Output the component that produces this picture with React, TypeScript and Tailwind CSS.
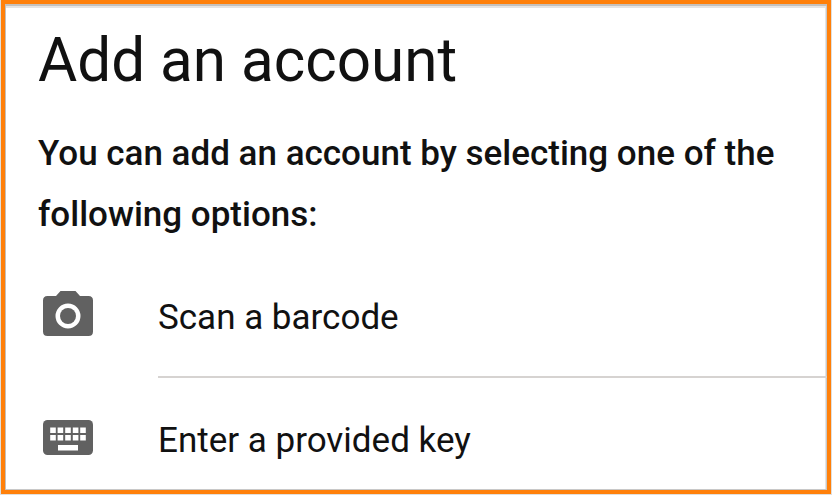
import React from "react";

interface AccountOption {
  label: string;
  icon: React.ReactNode;
}

const CameraIcon = () => (
  <svg className="mb-[7px] block h-[45px] w-[50px]" viewBox="0 0 50 45" fill="#616161">
    <path
      fillRule="evenodd"
      d="M17.5 0 13 5H4.500Q0 5 0 9.500V40.500Q0 45 4.500 45H45.500Q50 45 50 40.500V9.500Q50 5 45.500 5H37L32.500 0ZM25 12.500a12.500 12.500 0 1 1 0 25 12.500 12.500 0 0 1 0-25Z"
    />
    <circle cx="25" cy="25" r="8" />
  </svg>
);

const KeyboardIcon = () => (
  <svg className="mb-[4px] block h-[35px] w-[50px]" viewBox="0 0 50 35">
    <rect width="50" height="35" rx="4.500" fill="#616161" />
    <path
      fill="#fff"
      d="M7.200 7.500h5.600v5.600H7.200zM14.600 7.500h5.600v5.600h-5.600zM22.200 7.500h5.600v5.600h-5.600zM29.800 7.500h5.600v5.600h-5.600zM37.200 7.500h5.600v5.600h-5.600zM7.200 15h5.600v5.600H7.200zM14.600 15h5.600v5.600h-5.600zM22.200 15h5.600v5.600h-5.600zM29.800 15h5.600v5.600h-5.600zM37.200 15h5.600v5.600h-5.600zM15 25h20v5.500H15z"
    />
  </svg>
);

const OPTIONS: AccountOption[] = [
  { label: "Scan a barcode", icon: <CameraIcon /> },
  { label: "Enter a provided key", icon: <KeyboardIcon /> },
];

const App: React.FC = () => {
  return (
    <div className="h-[495px] w-[832px] bg-[#e0dfdd] px-px pb-px">
      <main className="h-[494px] overflow-hidden border-4 border-[#ff800a] bg-white pl-[33px] font-['Roboto',sans-serif] text-[#111] shadow-[inset_1px_2px_0_#c4c0bc,inset_-1px_-1px_0_#c8c8c8,inset_-2px_4px_0_#e6e4e2]">
        <h1 className="mt-[21px] text-[60.2px] leading-[72px] whitespace-nowrap">
          Add an account
        </h1>
        <p className="mt-[26px] w-[760px] text-[35px] leading-[61px] font-medium">
          You can add an account by selecting one of the following options:
        </p>
        <ul className="mt-[10px]">
          {OPTIONS.map((option) => (
            <li key={option.label} className="flex h-[123px] items-center">
              <div className="w-[120px] pl-[5px]">{option.icon}</div>
              <span className="flex h-full flex-1 items-center border-b-2 border-[#d6d3d1] pt-[5px] text-[35px]">
                {option.label}
              </span>
            </li>
          ))}
        </ul>
      </main>
    </div>
  );
};

export default App;
